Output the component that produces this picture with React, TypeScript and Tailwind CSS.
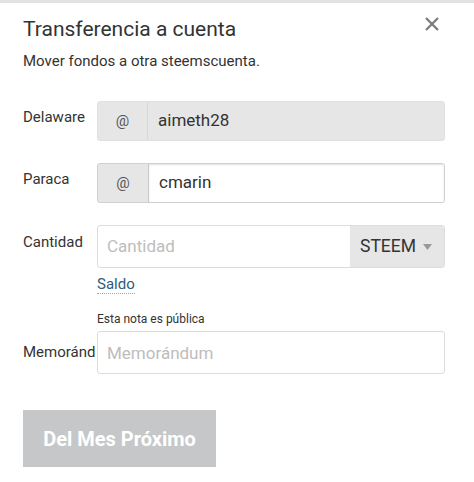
export default function App() {
    return (
        <div className="min-h-[482px] w-[474px] bg-white font-['Roboto',sans-serif] text-[#333]">
            <div className="h-[3px] bg-[#e3e3e3]" />
            <div className="relative px-[23px] pt-[11px]">
                {/* Close */}
                <button className="absolute top-[14px] right-[35px] text-[#7a7a7a]">
                    <svg width="14" height="14" viewBox="0 0 14 14">
                        <path d="M1 1L13 13M13 1L1 13" stroke="currentColor" strokeWidth="2.2" />
                    </svg>
                </button>

                <h1 className="text-[21px] leading-[30px] text-[#333]">Transferencia a cuenta</h1>
                <p className="mt-[7px] text-[15px] leading-[20px] text-[#333]">
                    Mover fondos a otra steemscuenta.
                </p>

                {/* Desde */}
                <div className="mt-[30px] flex items-start">
                    <label className="w-[74px] pt-[5px] text-[15px] text-[#333]">Delaware</label>
                    <div className="flex h-[40px] w-[348px] overflow-hidden rounded-[3px] border border-[#e0e0e0] bg-[#e6e6e6]">
                        <span className="flex w-[50px] items-center justify-center border-r border-[#d8d8d8] text-[15px] text-[#555]">
                            @
                        </span>
                        <span className="flex flex-1 items-center pl-[10px] text-[17px] text-[#333]">
                            aimeth28
                        </span>
                    </div>
                </div>

                {/* Para */}
                <div className="mt-[22px] flex items-start">
                    <label className="w-[74px] pt-[5px] text-[15px] text-[#333]">Paraca</label>
                    <div className="flex h-[40px] w-[348px] overflow-hidden rounded-[3px] border border-[#d0d0d0] bg-[#e6e6e6]">
                        <span className="flex w-[50px] items-center justify-center text-[15px] text-[#555]">
                            @
                        </span>
                        <input
                            defaultValue="cmarin"
                            className="flex-1 border-l border-[#c8c8c8] bg-white pl-[10px] text-[17px] text-[#333] shadow-[inset_0_1px_2px_rgba(0,0,0,0.12)] outline-none"
                        />
                    </div>
                </div>

                {/* Cantidad */}
                <div className="mt-[22px] flex items-start">
                    <label className="w-[74px] pt-[6px] text-[15px] text-[#333]">Cantidad</label>
                    <div>
                        <div className="flex h-[43px] w-[348px] overflow-hidden rounded-[3px] border border-[#dcdcdc]">
                            <input
                                placeholder="Cantidad"
                                className="min-w-0 flex-1 pl-[9px] text-[17px] text-[#333] outline-none placeholder:text-[#bdbdbd]"
                            />
                            <div className="flex w-[94px] items-center gap-[7px] bg-[#e6e6e6] pl-[10px] text-[17.5px] text-[#333]">
                                STEEM
                                <svg width="9" height="6" viewBox="0 0 9 6">
                                    <path d="M0 0H9L4.5 6Z" fill="#999" />
                                </svg>
                            </div>
                        </div>
                        <a className="mt-[7px] inline-block border-b border-dotted border-[#9aa8b5] text-[15px] leading-[18px] text-[#2f5b7c]">
                            Saldo
                        </a>
                    </div>
                </div>

                {/* Memo */}
                <div className="mt-[15px] pl-[74px] text-[12px] leading-[16px] text-[#333]">
                    Esta nota es pública
                </div>
                <div className="mt-[4px] flex items-center">
                    <label className="w-[74px] overflow-hidden text-[15px] whitespace-nowrap text-[#333]">
                        Memoránd
                    </label>
                    <input
                        placeholder="Memorándum"
                        className="h-[43px] w-[348px] rounded-[3px] border border-[#dcdcdc] pl-[9px] text-[17px] outline-none placeholder:text-[#bdbdbd]"
                    />
                </div>

                <button className="mt-[36px] h-[57px] w-[193px] bg-[#c6c7c8] text-[20px] font-bold text-white">
                    Del Mes Próximo
                </button>
            </div>
        </div>
    );
}
